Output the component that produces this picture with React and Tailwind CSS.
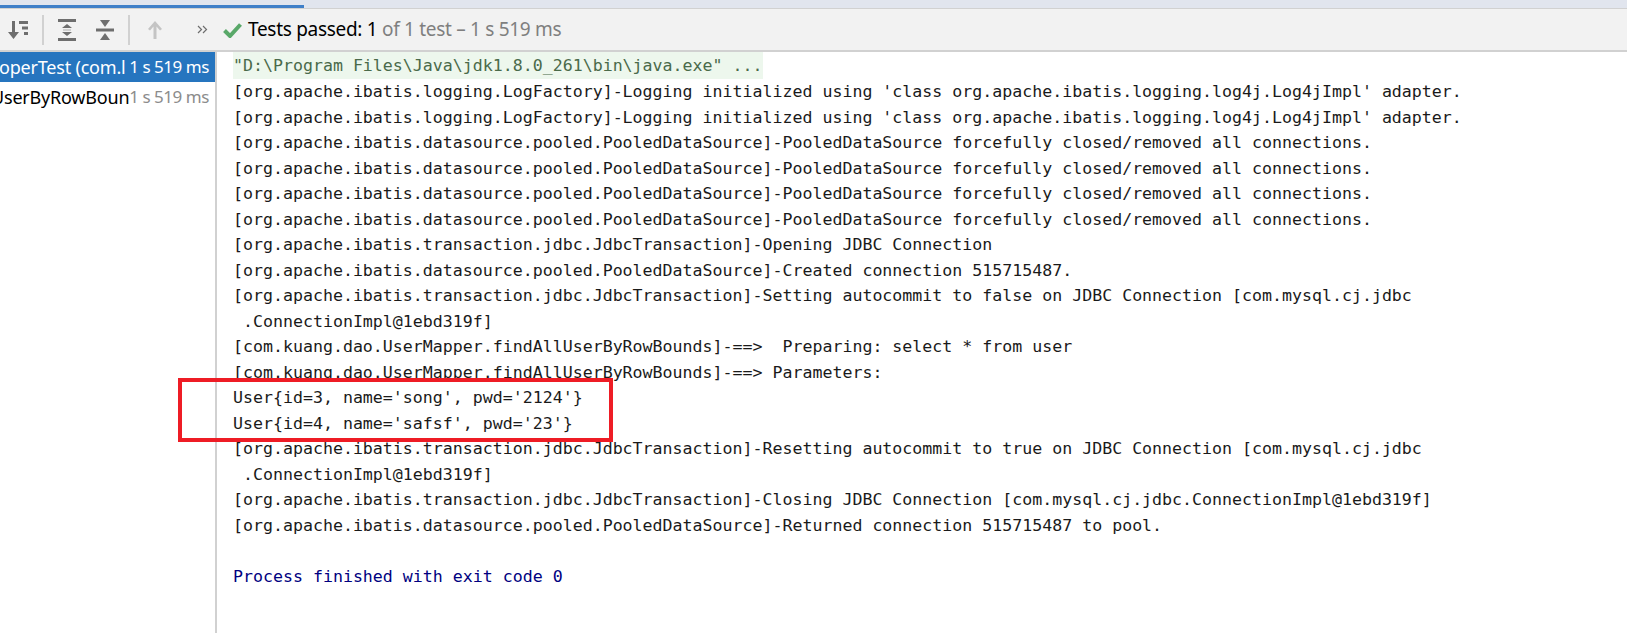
const lines = [
  "[org.apache.ibatis.logging.LogFactory]-Logging initialized using 'class org.apache.ibatis.logging.log4j.Log4jImpl' adapter.",
  "[org.apache.ibatis.logging.LogFactory]-Logging initialized using 'class org.apache.ibatis.logging.log4j.Log4jImpl' adapter.",
  "[org.apache.ibatis.datasource.pooled.PooledDataSource]-PooledDataSource forcefully closed/removed all connections.",
  "[org.apache.ibatis.datasource.pooled.PooledDataSource]-PooledDataSource forcefully closed/removed all connections.",
  "[org.apache.ibatis.datasource.pooled.PooledDataSource]-PooledDataSource forcefully closed/removed all connections.",
  "[org.apache.ibatis.datasource.pooled.PooledDataSource]-PooledDataSource forcefully closed/removed all connections.",
  "[org.apache.ibatis.transaction.jdbc.JdbcTransaction]-Opening JDBC Connection",
  "[org.apache.ibatis.datasource.pooled.PooledDataSource]-Created connection 515715487.",
  "[org.apache.ibatis.transaction.jdbc.JdbcTransaction]-Setting autocommit to false on JDBC Connection [com.mysql.cj.jdbc",
  " .ConnectionImpl@1ebd319f]",
  "[com.kuang.dao.UserMapper.findAllUserByRowBounds]-==>  Preparing: select * from user",
  "[com.kuang.dao.UserMapper.findAllUserByRowBounds]-==> Parameters:",
  "User{id=3, name='song', pwd='2124'}",
  "User{id=4, name='safsf', pwd='23'}",
  "[org.apache.ibatis.transaction.jdbc.JdbcTransaction]-Resetting autocommit to true on JDBC Connection [com.mysql.cj.jdbc",
  " .ConnectionImpl@1ebd319f]",
  "[org.apache.ibatis.transaction.jdbc.JdbcTransaction]-Closing JDBC Connection [com.mysql.cj.jdbc.ConnectionImpl@1ebd319f]",
  "[org.apache.ibatis.datasource.pooled.PooledDataSource]-Returned connection 515715487 to pool.",
];

function SortIcon() {
  return (
    <svg width="22" height="20" viewBox="0 0 22 20" className="text-[#6e6e6e]">
      <path d="M5 1h3v11h4l-5.500 7L1 12h4z" fill="currentColor" />
      <rect x="12" y="1" width="9" height="3" fill="currentColor" />
      <rect x="15" y="6.500" width="6" height="3" fill="currentColor" />
      <rect x="17" y="12" width="4" height="3" fill="currentColor" />
    </svg>
  );
}
function ExpandIcon() {
  return (
    <svg width="18" height="22" viewBox="0 0 18 22" className="text-[#6e6e6e]">
      <rect x="0" y="0" width="18" height="3" fill="currentColor" />
      <rect x="0" y="19" width="18" height="3" fill="currentColor" />
      <path d="M9 5l5 4H4z" fill="currentColor" />
      <path d="M9 17l5-4H4z" fill="currentColor" />
      <rect x="5" y="10.500" width="8" height="1" fill="currentColor" opacity="0.5" />
    </svg>
  );
}
function CollapseIcon() {
  return (
    <svg width="18" height="20" viewBox="0 0 18 20" className="text-[#6e6e6e]">
      <path d="M4 0h10L9 7z" fill="currentColor" />
      <rect x="0" y="8.500" width="18" height="3" fill="currentColor" />
      <path d="M4 20h10l-5-7z" fill="currentColor" />
    </svg>
  );
}
function UpIcon() {
  return (
    <svg width="16" height="20" viewBox="0 0 16 20" className="text-[#c4c4c4]">
      <path d="M8 1l7 8-2 1.500L9.500 6.500V19h-3V6.500L3 10.500 1 9z" fill="currentColor" />
    </svg>
  );
}
function MoreIcon() {
  return (
    <svg width="11" height="9" viewBox="0 0 11 9" fill="none" stroke="#6e6e6e" strokeWidth="1.200">
      <path d="M1 1l3.500 3.500L1 8" />
      <path d="M6 1l3.500 3.500L6 8" />
    </svg>
  );
}
function CheckIcon() {
  return (
    <svg width="19" height="16" viewBox="0 0 19 16">
      <path d="M1.500 8.500L7 14 17.500 2.500" fill="none" stroke="#59a869" strokeWidth="4" />
    </svg>
  );
}

const ui = { fontFamily: '"Noto Sans", "Open Sans", sans-serif' };
const mono = { fontFamily: '"DejaVu Sans Mono", "Liberation Mono", monospace' };

export default function App() {
  return (
    <div className="relative w-[1627px] h-[633px] overflow-hidden bg-white flex flex-col">
      <div className="h-[9px] shrink-0 bg-[#e1e5ee] border-b border-[#d1d1d1] pt-[5px]">
        <div className="h-[3px] w-[304px] bg-[#3f7fc8]" />
      </div>
      <div className="h-[43px] shrink-0 bg-[#f2f2f2] border-b-2 border-[#d1d1d1] flex items-center">
        <div className="w-[42px] pl-[7px] flex items-center"><SortIcon /></div>
        <div className="w-[2px] h-[30px] bg-[#d1d1d1]" />
        <div className="ml-[14px]"><ExpandIcon /></div>
        <div className="ml-[20px]"><CollapseIcon /></div>
        <div className="ml-[14px] w-[2px] h-[30px] bg-[#d1d1d1]" />
        <div className="ml-[17px]"><UpIcon /></div>
        <div className="ml-[34px]"><MoreIcon /></div>
        <div className="ml-[15px]"><CheckIcon /></div>
        <div className="ml-[6px] text-[19px] whitespace-nowrap tracking-[-0.3px] text-black" style={ui}>
          Tests passed: 1 <span className="text-[#7f7f7f]">of 1 test – 1 s 519 ms</span>
        </div>
      </div>
      <div className="flex flex-1 min-h-0">
        <div className="w-[215px] shrink-0 text-[18px] tracking-[-0.2px] leading-[30px]" style={ui}>
          <div className="h-[30px] bg-[#2675bf] text-white flex justify-between pr-[6px] whitespace-nowrap overflow-hidden">
            <span className="-ml-[1px] min-w-0 overflow-hidden">operTest (com.l</span>
            <span className="shrink-0 text-[17px] tracking-[-0.45px]">1 s 519 ms</span>
          </div>
          <div className="h-[30px] flex justify-between pr-[6px] whitespace-nowrap overflow-hidden">
            <span className="-ml-[9px] min-w-0 overflow-hidden">UserByRowBoun</span>
            <span className="shrink-0 text-[17px] tracking-[-0.45px] text-[#8c8c8c]">1 s 519 ms</span>
          </div>
        </div>
        <div className="w-[2px] shrink-0 bg-[#d1d1d1]" />
        <div className="pl-[16px] flex-1 min-w-0 text-[16.6px] leading-[25.5px] whitespace-pre text-[#1a1a1a]" style={mono}>
          <div className="pt-[1px] text-[#4a6a4a] bg-[#edf7ed] w-[530px] h-[27px]">"D:\Program Files\Java\jdk1.8.0_261\bin\java.exe" ...</div>
          {lines.map((l, i) => <div key={i}>{l}</div>)}
          <div>{" "}</div>
          <div className="text-[#000080]">Process finished with exit code 0</div>
        </div>
      </div>
      <div className="absolute left-[178px] top-[378px] w-[435px] h-[64px] border-[4px] border-[#ee1c25]" />
    </div>
  );
}
